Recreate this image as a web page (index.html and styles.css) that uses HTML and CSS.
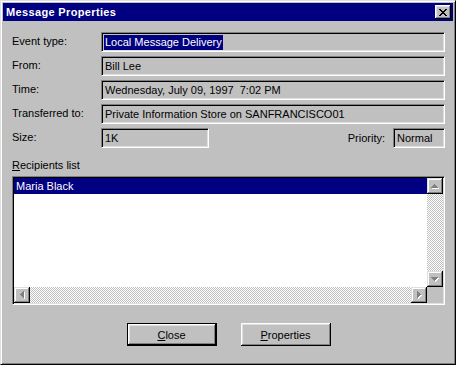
FILE: index.html
```html
<!DOCTYPE html>
<html lang="en">
<head>
    <meta charset="UTF-8">
    <title>Message Properties</title>
    <link rel="stylesheet" href="styles.css">
</head>
<body>

    <div class="window">
        <div class="titlebar">
            <span class="title">Message Properties</span>
            <div class="close-box">
                <svg width="8" height="7" viewBox="0 0 8 7" shape-rendering="crispEdges"><path d="M0 0h2v1h-2zM6 0h2v1h-2zM1 1h2v1h-2zM5 1h2v1h-2zM2 2h4v1h-4zM3 3h2v1h-2zM2 4h4v1h-4zM1 5h2v1h-2zM5 5h2v1h-2zM0 6h2v1h-2zM6 6h2v1h-2z" fill="#000"/></svg>
            </div>
        </div>

        <div class="content">
            <div class="row">
                <span class="label">Event type:</span>
                <div class="field"><span class="selected">Local Message Delivery</span></div>
            </div>
            <div class="row">
                <span class="label">From:</span>
                <div class="field">Bill Lee</div>
            </div>
            <div class="row">
                <span class="label">Time:</span>
                <div class="field">Wednesday, July 09, 1997&nbsp; 7:02 PM</div>
            </div>
            <div class="row">
                <span class="label">Transferred to:</span>
                <div class="field">Private Information Store on SANFRANCISCO01</div>
            </div>
            <div class="row">
                <span class="label">Size:</span>
                <div class="field size">1K</div>
                <span class="priority-label">Priority:</span>
                <div class="field priority">Normal</div>
            </div>

            <div class="list-label"><u>R</u>ecipients list</div>
            <div class="listbox">
                <div class="list-items">
                    <div class="item active">Maria Black</div>
                </div>
                <div class="vscroll">
                    <div class="scroll-btn">
                        <svg width="8" height="5" viewBox="0 0 8 5" shape-rendering="crispEdges"><path d="M3 0h1v1h1v1h1v1h1v1H0V3h1V2h1V1h1z" fill="#fff" transform="translate(1 1)"/><path d="M3 0h1v1h1v1h1v1h1v1H0V3h1V2h1V1h1z" fill="#808080"/></svg>
                    </div>
                    <div class="track"></div>
                    <div class="scroll-btn">
                        <svg width="8" height="5" viewBox="0 0 8 5" shape-rendering="crispEdges"><path d="M3 0h1v1h1v1h1v1h1v1H0V3h1V2h1V1h1z" fill="#fff" transform="translate(1 1) matrix(1 0 0 -1 0 4)"/><path d="M3 0h1v1h1v1h1v1h1v1H0V3h1V2h1V1h1z" fill="#808080" transform="matrix(1 0 0 -1 0 4)"/></svg>
                    </div>
                </div>
                <div class="hscroll">
                    <div class="scroll-btn">
                        <svg width="5" height="8" viewBox="0 0 5 8" shape-rendering="crispEdges"><path d="M3 0h1v1h1v1h1v1h1v1H0V3h1V2h1V1h1z" fill="#fff" transform="translate(1 1) matrix(0 1 1 0 0 0)"/><path d="M3 0h1v1h1v1h1v1h1v1H0V3h1V2h1V1h1z" fill="#808080" transform="matrix(0 1 1 0 0 0)"/></svg>
                    </div>
                    <div class="track"></div>
                    <div class="scroll-btn">
                        <svg width="5" height="8" viewBox="0 0 5 8" shape-rendering="crispEdges"><path d="M3 0h1v1h1v1h1v1h1v1H0V3h1V2h1V1h1z" fill="#fff" transform="translate(1 1) matrix(0 1 -1 0 4 0)"/><path d="M3 0h1v1h1v1h1v1h1v1H0V3h1V2h1V1h1z" fill="#808080" transform="matrix(0 1 -1 0 4 0)"/></svg>
                    </div>
                </div>
                <div class="corner"></div>
            </div>

            <div class="buttons">
                <button class="button default"><u>C</u>lose</button>
                <button class="button"><u>P</u>roperties</button>
            </div>
        </div>
    </div>

</body>
</html>
```

FILE: styles.css
```css
body {
    margin: 0;
    font-family: 'Liberation Sans', Arial, sans-serif;
    font-size: 11px;
    color: #000;
    background-color: #c0c0c0;
}

.window {
    box-sizing: border-box;
    width: 456px;
    height: 365px;
    padding: 2px;
    background-color: #c0c0c0;
    border: 1px solid;
    border-color: #dfdfdf #000 #000 #dfdfdf;
    box-shadow: inset 1px 1px #fff, inset -1px -1px #808080;
}

.titlebar {
    display: flex;
    align-items: center;
    height: 18px;
    padding: 0 2px 0 3px;
    background-color: #000080;
    color: #fff;
}

.title {
    flex: 1;
    font-weight: bold;
    letter-spacing: 0.35px;
    line-height: 18px;
}

.close-box {
    display: flex;
    align-items: center;
    justify-content: center;
    box-sizing: border-box;
    width: 16px;
    height: 14px;
    background-color: #c0c0c0;
    box-shadow: inset -1px -1px #000, inset 1px 1px #fff, inset -2px -2px #808080, inset 2px 2px #dfdfdf;
}

.content {
    padding: 11px 8px 0 9px;
}

.row {
    display: flex;
    align-items: center;
    height: 20px;
    margin-bottom: 4px;
}

.label {
    width: 89px;
    flex: none;
    margin-top: -2px;
}

.field {
    box-sizing: border-box;
    flex: 1;
    height: 20px;
    padding-left: 3px;
    line-height: 18px;
    white-space: nowrap;
    border: 1px solid;
    border-color: #808080 #fff #fff #808080;
    box-shadow: inset 1px 1px #000, inset -1px -1px #dfdfdf;
}

.field.size {
    flex: none;
    width: 108px;
}

.field.priority {
    flex: none;
    width: 52px;
}

.priority-label {
    margin-left: auto;
    margin-right: 8px;
}

.selected {
    display: inline-block;
    margin-left: -1px;
    padding: 0 1px;
    line-height: 15px;
    background-color: #000080;
    color: #fff;
}

.list-label {
    margin-top: 11px;
    margin-bottom: 4px;
    line-height: 13px;
}

.listbox {
    box-sizing: border-box;
    display: grid;
    grid-template-columns: 1fr 16px;
    grid-template-rows: 1fr 16px;
    height: 129px;
    padding: 1px;
    border: 1px solid;
    border-color: #808080 #fff #fff #808080;
    box-shadow: inset 1px 1px #000, inset -1px -1px #dfdfdf;
}

.list-items {
    background-color: #fff;
}

.item {
    height: 16px;
    line-height: 16px;
    padding-left: 2px;
}

.item.active {
    background-color: #000080;
    color: #fff;
}

.vscroll {
    display: flex;
    flex-direction: column;
}

.hscroll {
    display: flex;
}

.track {
    flex: 1;
    background-color: #fff;
    background-image: repeating-conic-gradient(#c0c0c0 0 25%, #fff 0 50%);
    background-size: 2px 2px;
}

.scroll-btn {
    display: flex;
    align-items: center;
    justify-content: center;
    flex: none;
    width: 16px;
    height: 16px;
    background-color: #c0c0c0;
    box-shadow: inset -1px -1px #000, inset 1px 1px #dfdfdf, inset -2px -2px #808080, inset 2px 2px #fff;
}

.corner {
    background-color: #c0c0c0;
}

.buttons {
    display: flex;
    justify-content: center;
    gap: 24px;
    margin-top: 18px;
}

.button {
    box-sizing: border-box;
    width: 90px;
    height: 23px;
    padding: 0;
    font-family: inherit;
    font-size: 11px;
    color: #000;
    background-color: #c0c0c0;
    border: none;
    box-shadow: inset -1px -1px #000, inset 1px 1px #fff, inset -2px -2px #808080, inset 2px 2px #dfdfdf;
}

.button.default {
    border: 1px solid #000;
}
```
